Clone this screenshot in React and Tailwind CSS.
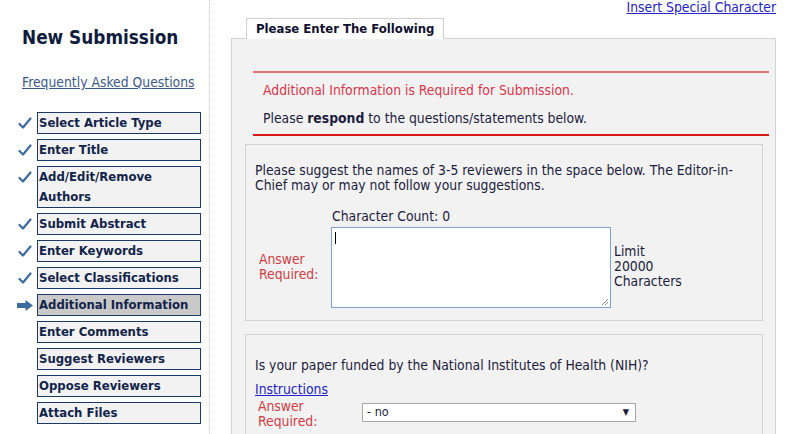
import React from "react";

const navItems = [
  { label: "Select Article Type", state: "done" },
  { label: "Enter Title", state: "done" },
  { label: "Add/Edit/Remove Authors", state: "done" },
  { label: "Submit Abstract", state: "done" },
  { label: "Enter Keywords", state: "done" },
  { label: "Select Classifications", state: "done" },
  { label: "Additional Information", state: "current" },
  { label: "Enter Comments" },
  { label: "Suggest Reviewers" },
  { label: "Oppose Reviewers" },
  { label: "Attach Files" },
];

function Check() {
  return (
    <svg width="14" height="13" viewBox="0 0 14 13">
      <path d="M1.5 7 L5 10.5 L12.5 1.5" fill="none" stroke="#3d6a9c" strokeWidth="2.2" strokeLinecap="round" strokeLinejoin="round" />
    </svg>
  );
}

function Arrow() {
  return (
    <svg width="16" height="11" viewBox="0 0 16 11">
      <path d="M0 3 H8.5 V0 L16 5.5 L8.5 11 V8 H0 Z" fill="#3d6a9c" />
    </svg>
  );
}

export default function App() {
  return (
    <div className="w-[800px] h-[434px] overflow-hidden flex bg-white font-['DejaVu_Sans_Condensed','DejaVu_Sans',sans-serif] text-[13.8px] text-[#1c1c3c]">
      {/* Left nav */}
      <div className="w-[210px] shrink-0 border-r border-dotted border-[#c8c8c8] pl-[22px] pt-[26px]">
        <h1 className="text-[18.8px] font-bold text-[#0f1c3c] leading-[24px]">New Submission</h1>
        <a className="block mt-[24px] underline text-[#3b5a88] leading-[16px]">Frequently Asked Questions</a>
        <div className="mt-[22px] flex flex-col gap-[5px] -ml-[7px] text-[13px]">
          {navItems.map((item) => (
            <div key={item.label} className="flex items-start">
              <div className="w-[22px] h-[22px] shrink-0 flex items-center justify-center -ml-[1px] mr-[1px]">
                {item.state === "done" && <Check />}
                {item.state === "current" && <Arrow />}
              </div>
              <div
                className={`w-[164px] border border-[#1d3a66] px-[1px] leading-[20px] font-bold text-[#13244a] ${
                  item.state === "current" ? "bg-[#c9c9c9]" : "bg-[#f2f2f2]"
                }`}
              >
                {item.label}
              </div>
            </div>
          ))}
        </div>
      </div>

      {/* Main */}
      <div className="flex-1 pl-[21px] pr-[24px] flex flex-col">
        <div className="flex justify-end">
          <a className="underline text-[#2323c8] leading-[15px]">Insert Special Character</a>
        </div>
        <div className="flex pl-[15px] mt-[2px]">
          <div className="border border-b-0 border-[#cfcfcf] bg-white px-[9px] leading-[20px] font-bold text-[13px] text-[#101030] relative top-px">
            Please Enter The Following
          </div>
        </div>
        <div className="flex-1 border border-[#d2d2d2] bg-[#f2f2f2] pl-[13px] pr-[12px] pt-[32px]">
          <div className="ml-[8px] mr-[-6px] border-t-2 border-[#e07878]" />
          <div className="ml-[8px] pl-[10px] pt-[9px] text-[#d9364a] leading-[16px]">
            Additional Information is Required for Submission.
          </div>
          <div className="ml-[8px] pl-[10px] pt-[12px] leading-[16px]">
            Please <b>respond</b> to the questions/statements below.
          </div>
          <div className="ml-[8px] mr-[-6px] mt-[8px] border-t-2 border-[#d81818]" />

          <div className="mt-[8px] border border-[#d2d2d2] bg-[#f2f2f2] pl-[9px] pr-[8px] pt-[18px] pb-[12px]">
            <p className="leading-[15px]">
              Please suggest the names of 3-5 reviewers in the space below. The Editor-in-Chief may or may not follow your suggestions.
            </p>
            <div className="flex mt-[15px]">
              <div className="w-[76px] shrink-0 flex items-center pl-[4px] pt-[18px] text-[#d03c44] leading-[15px]">
                Answer
                <br />
                Required:
              </div>
              <div className="flex flex-col">
                <div className="pl-[1px] leading-[16px]">Character Count: 0</div>
                <div className="flex items-center mt-[3px]">
                  <div className="w-[280px] h-[81px] bg-white border border-[#7da2ce] relative">
                    <span className="absolute left-[3px] top-[4px] w-px h-[12px] bg-black" />
                    <svg className="absolute right-[1px] bottom-[1px]" width="8" height="8" viewBox="0 0 8 8">
                      <path d="M7 1 L1 7 M7 4 L4 7" stroke="#888" strokeWidth="1" />
                    </svg>
                  </div>
                  <div className="pl-[3px] leading-[15px] -mt-[2px]">
                    Limit
                    <br />
                    20000
                    <br />
                    Characters
                  </div>
                </div>
              </div>
            </div>
          </div>

          <div className="mt-[13px] border border-[#d2d2d2] bg-[#f2f2f2] pl-[9px] pr-[10px] pt-[22px] h-[120px]">
            <p className="leading-[16px]">Is your paper funded by the National Institutes of Health (NIH)?</p>
            <a className="block mt-[8px] underline text-[#2323c8] leading-[16px]">Instructions</a>
            <div className="flex items-start mt-[2px]">
              <div className="w-[107px] shrink-0 pl-[3px] text-[#d03c44] leading-[15px]">
                Answer
                <br />
                Required:
              </div>
              <div className="w-[274px] h-[19px] mt-[4px] bg-white border border-[#a8a8a8] flex items-center justify-between pl-[4px] pr-[6px] text-[12.5px]">
                <span>- no</span>
                <span className="text-[9px]">▼</span>
              </div>
            </div>
          </div>
        </div>
      </div>
    </div>
  );
}
